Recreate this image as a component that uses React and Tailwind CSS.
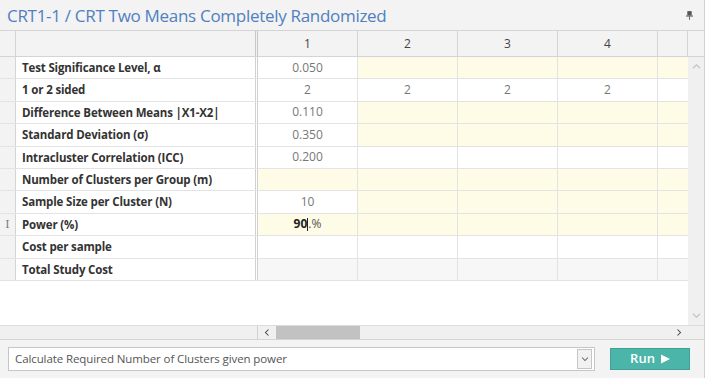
import React from "react";

const ff = { fontFamily: '"Open Sans", "Noto Sans", sans-serif' };

const rows = [
  { label: "Test Significance Level, α", v: "0.050", c1: "w", rest: "y" },
  { label: "1 or 2 sided", v: "2", c1: "w", rest: "w", others: "2" },
  { label: "Difference Between Means |X1-X2|", v: "0.110", c1: "w", rest: "y" },
  { label: "Standard Deviation (σ)", v: "0.350", c1: "w", rest: "y" },
  { label: "Intracluster Correlation (ICC)", v: "0.200", c1: "w", rest: "w" },
  { label: "Number of Clusters per Group (m)", v: "", c1: "y", rest: "y" },
  { label: "Sample Size per Cluster (N)", v: "10", c1: "w", rest: "y" },
  { label: "Power (%)", v: "power", c1: "y", rest: "y", cursor: true },
  { label: "Cost per sample", v: "", c1: "w", rest: "w" },
  { label: "Total Study Cost", v: "", c1: "g", rest: "g" },
];

const bgOf = (k) =>
  k === "y" ? "bg-[#fefbe6]" : k === "g" ? "bg-[#f7f7f7]" : "bg-white";

function Chevron({ dir, className }) {
  const pts = {
    up: "1,6 5,2 9,6",
    down: "1,2 5,6 9,2",
    left: "6,1 2,5 6,9",
    right: "2,1 6,5 2,9",
  }[dir];
  const vb = dir === "up" || dir === "down" ? "0 0 10 8" : "0 0 8 10";
  return (
    <svg viewBox={vb} className={className}>
      <polyline points={pts} fill="none" stroke="currentColor" strokeWidth="1.4" />
    </svg>
  );
}

export default function App() {
  return (
    <div className="w-[706px] h-[378px] bg-white overflow-hidden" style={ff}>
      <div className="w-[705px] h-[378px] flex flex-col border-r border-[#d0d0d0]">
        {/* title */}
        <div className="h-[31px] bg-[#f3f3f3] border-b border-[#d4d4d4] flex items-center justify-between pl-[7px] pr-[11px]">
          <span className="text-[17px] text-[#5080c0] leading-none tracking-[-0.3px]">
            CRT1-1 / CRT Two Means Completely Randomized
          </span>
          <svg viewBox="0 0 8 10" className="w-[7px] h-[9px] text-[#555]">
            <rect x="1.5" y="0" width="5" height="5" fill="currentColor" />
            <rect x="0" y="5" width="8" height="1.2" fill="currentColor" />
            <rect x="3.5" y="6" width="1" height="4" fill="currentColor" />
          </svg>
        </div>

        {/* header row */}
        <div className="h-[26px] flex bg-[#f3f3f3] border-b border-[#d4d4d4] text-[12px] text-[#444]">
          <div className="w-[16px] border-r border-[#d4d4d4]" />
          <div className="w-[242px] border-r-[3px] border-double border-[#c8c8c8]" />
          {["1", "2", "3", "4"].map((h) => (
            <div key={h} className="w-[100px] border-r border-[#d4d4d4] flex items-center justify-center">
              {h}
            </div>
          ))}
          <div className="w-[30px] border-r border-[#d4d4d4]" />
          <div className="flex-1" />
        </div>

        {/* body */}
        <div className="h-[268px] flex">
          <div className="w-[688px] flex flex-col">
            {rows.map((r, i) => (
              <div key={i} className="h-[22.4px] flex border-b border-[#e3e3e3] text-[12px] shrink-0">
                <div className="w-[16px] bg-[#f3f3f3] border-r border-[#d4d4d4] flex items-center justify-center">
                  {r.cursor && (
                    <span className="text-[11px] text-[#777] leading-none" style={{ fontFamily: '"DejaVu Serif", serif' }}>
                      I
                    </span>
                  )}
                </div>
                <div className="w-[242px] border-r-[3px] border-double border-[#d0d0d0] flex items-center pl-[6px] font-bold text-[11.5px] tracking-[-0.15px] text-[#333] bg-white">
                  {r.label}
                </div>
                <div className={`w-[100px] border-r border-[#e3e3e3] flex items-center justify-center text-[#777] ${bgOf(r.c1)}`}>
                  {r.v === "power" ? (
                    <span className="flex items-center">
                      <span className="font-bold text-[#222]">90</span>
                      <span className="w-px h-[13px] bg-[#222]" />
                      <span className="text-[#555]">.%</span>
                    </span>
                  ) : (
                    r.v
                  )}
                </div>
                {[0, 1, 2].map((k) => (
                  <div key={k} className={`w-[100px] border-r border-[#e3e3e3] flex items-center justify-center text-[#777] ${bgOf(r.rest)}`}>
                    {r.others || ""}
                  </div>
                ))}
                <div className={`w-[30px] ${bgOf(r.rest)}`} />
              </div>
            ))}
            <div className="flex-1 bg-white" />
          </div>
          <div className="w-[16px] bg-[#f0f0f0] flex flex-col items-center justify-between py-[6px] text-[#c4c4c4]">
            <Chevron dir="up" className="w-[9px] h-[7px]" />
            <Chevron dir="down" className="w-[9px] h-[7px]" />
          </div>
        </div>

        {/* horizontal scrollbar */}
        <div className="h-[15px] flex border-t border-[#dcdcdc] border-b border-b-[#d4d4d4] bg-[#f0f0f0]">
          <div className="w-[258px] border-r border-[#d0d0d0]" />
          <div className="w-[430px] flex items-center">
            <div className="w-[18px] flex justify-center text-[#444]">
              <Chevron dir="left" className="w-[6px] h-[9px]" />
            </div>
            <div className="w-[84px] h-full bg-[#c2c2c2]" />
            <div className="flex-1" />
            <div className="w-[18px] flex justify-center text-[#444]">
              <Chevron dir="right" className="w-[6px] h-[9px]" />
            </div>
          </div>
          <div className="flex-1" />
        </div>

        {/* bottom bar */}
        <div className="flex-1 bg-[#f3f3f3] flex items-center pl-[8px]">
          <div className="w-[587px] h-[24px] bg-white border border-[#c6c6c6] flex items-center">
            <span className="flex-1 pl-[6px] text-[11.5px] tracking-[-0.1px] text-[#555]">
              Calculate Required Number of Clusters given power
            </span>
            <div className="w-[15px] h-[20px] mr-[2px] bg-[#f2f2f2] border border-[#c6c6c6] flex items-center justify-center text-[#666]">
              <Chevron dir="down" className="w-[8px] h-[6px]" />
            </div>
          </div>
          <div className="ml-[15px] w-[80px] h-[22px] bg-[#4bb5a9] border border-[#3ea196] flex items-center justify-center gap-[6px] text-white text-[13px] font-semibold">
            <span>Run</span>
            <svg viewBox="0 0 10 10" className="w-[9px] h-[10px]">
              <polygon points="0,0 10,5 0,10" fill="white" />
            </svg>
          </div>
        </div>
      </div>
    </div>
  );
}
